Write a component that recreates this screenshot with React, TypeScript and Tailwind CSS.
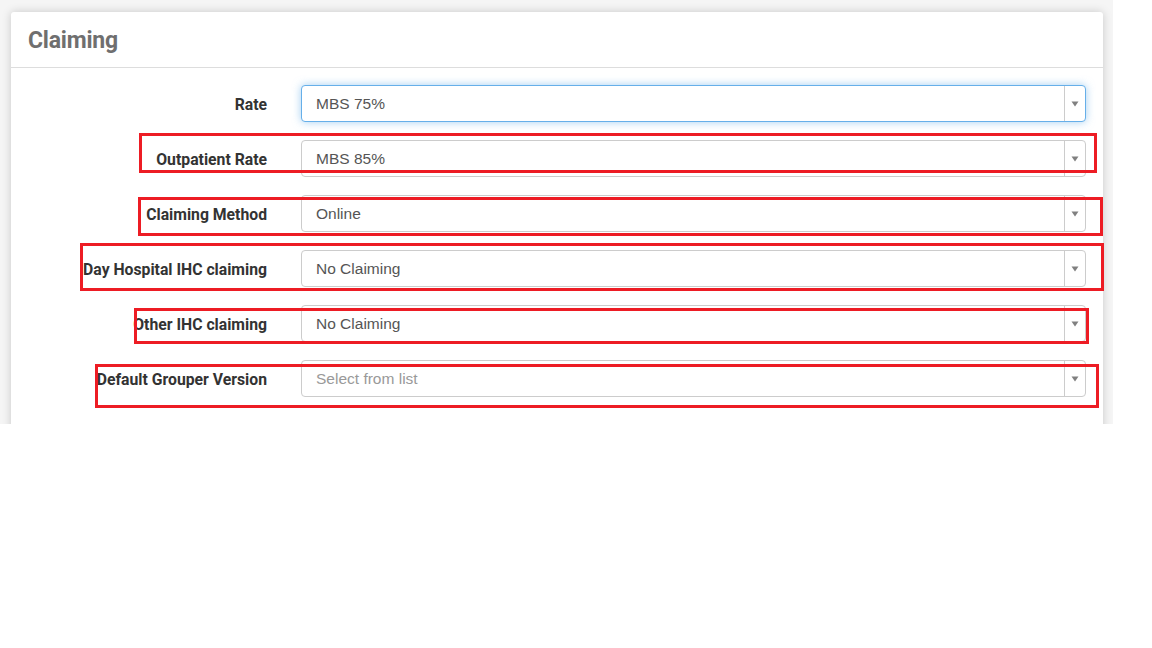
import React from 'react';

type Row = { label: string; value: string; placeholder?: boolean; focused?: boolean };

const rows: Row[] = [
    { label: 'Rate', value: 'MBS 75%', focused: true },
    { label: 'Outpatient Rate', value: 'MBS 85%' },
    { label: 'Claiming Method', value: 'Online' },
    { label: 'Day Hospital IHC claiming', value: 'No Claiming' },
    { label: 'Other IHC claiming', value: 'No Claiming' },
    { label: 'Default Grouper Version', value: 'Select from list', placeholder: true },
];

// annotation boxes drawn over the form
const marks = [
    'left-[139px] top-[133px] w-[958px] h-[40px]',
    'left-[138px] top-[197px] w-[965px] h-[39px]',
    'left-[80px] top-[243px] w-[1024px] h-[48px]',
    'left-[134px] top-[308px] w-[955px] h-[36px]',
    'left-[95px] top-[364px] w-[1004px] h-[44px]',
];

function SelectBox({ row }: { row: Row }) {
    return (
        <div
            className={
                row.focused
                    ? 'flex-1 h-[37px] flex items-stretch bg-white rounded-[4px] border border-[#66afe9] shadow-[0_0_8px_rgba(102,175,233,0.6)]'
                    : 'flex-1 h-[37px] flex items-stretch bg-white rounded-[4px] border border-[#cccccc]'
            }
        >
            <div
                className={
                    row.placeholder
                        ? 'flex-1 flex items-center pl-[14px] text-[15.5px] text-[#999999]'
                        : 'flex-1 flex items-center pl-[14px] text-[15.5px] text-[#555555]'
                }
                style={{ fontFamily: '"Liberation Sans", Arial, sans-serif' }}
            >
                {row.value}
            </div>
            <div className="w-[21px] border-l border-[#cccccc] flex items-center justify-center">
                <svg width="8" height="6" viewBox="0 0 8 6">
                    <path d="M0.5 0.5 L7.5 0.5 L4 5.5 Z" fill="#808080" />
                </svg>
            </div>
        </div>
    );
}

export default function App() {
    return (
        <div className="relative w-[1152px] h-[648px] bg-white overflow-hidden" style={{ fontFamily: 'Roboto, "Liberation Sans", sans-serif' }}>
            <div className="w-[1113px] h-[424px] bg-[#f5f5f5] pt-[12px] pl-[11px] overflow-hidden">
                <div className="w-[1092px] h-[440px] bg-white rounded-t-[3px] shadow-[0_0_10px_rgba(0,0,0,0.18)]">
                    <div className="h-[56px] border-b border-[#dddddd] flex items-center pl-[17px] pt-[3px]">
                        <h2 className="text-[23px] font-bold text-[#6f6f6f] tracking-[-0.2px]">Claiming</h2>
                    </div>
                    <div className="pt-[17px] pr-[17px] flex flex-col gap-[18px]">
                        {rows.map((row) => (
                            <div key={row.label} className="flex items-center">
                                <label className="w-[256px] pt-[2px] text-right text-[15.75px] font-bold text-[#333333]">{row.label}</label>
                                <div className="ml-[34px] flex-1 flex">
                                    <SelectBox row={row} />
                                </div>
                            </div>
                        ))}
                    </div>
                </div>
            </div>
            {marks.map((m) => (
                <div key={m} className={'absolute border-[3px] border-[#ed1c24] ' + m} />
            ))}
        </div>
    );
}
